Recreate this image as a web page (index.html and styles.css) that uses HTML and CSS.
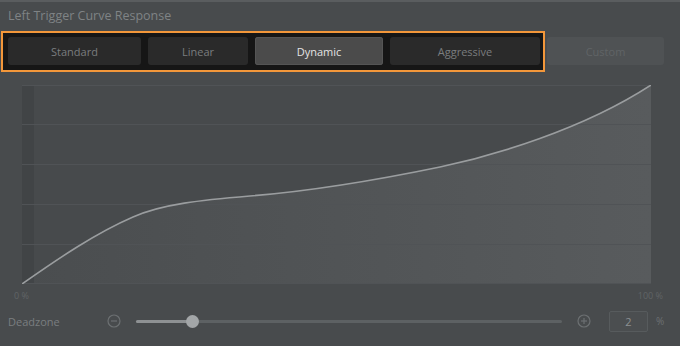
FILE: index.html
```html
<!DOCTYPE html>
<html>
<head>
<meta charset="utf-8">
<link rel="stylesheet" href="styles.css">
</head>
<body>
<div class="panel">
  <div class="title">Left Trigger Curve Response</div>
  <div class="presets">
    <div class="group">
      <button class="btn w-standard">Standard</button>
      <button class="btn w-linear">Linear</button>
      <button class="btn active w-dynamic">Dynamic</button>
      <button class="btn w-aggressive">Aggressive</button>
    </div>
    <button class="btn custom">Custom</button>
  </div>
  <div class="chart">
    <svg width="629" height="199" viewBox="0 0 629 199">
      <defs>
        <linearGradient id="fillg" x1="0" y1="0" x2="1" y2="0">
          <stop offset="0" stop-color="#4a4d4f"/>
          <stop offset="1" stop-color="#585b5d"/>
        </linearGradient>
      </defs>
      <rect x="0" y="0" width="629" height="199" fill="#474a4c"/>
      <path d="M0,199 C37,173 74,148 111,132 C140,119 180,115 228,111 C290,106 360,94 418,82 C470,71 560,45 629,0 L629,199 Z" fill="url(#fillg)"/>
      <rect x="0" y="0" width="12" height="199" fill="#3f4244" opacity="0.7"/>
      <g stroke="#505356" stroke-width="1">
        <line x1="0" y1="0.5" x2="629" y2="0.5"/>
        <line x1="0" y1="39.5" x2="629" y2="39.5"/>
        <line x1="0" y1="79.5" x2="629" y2="79.5"/>
        <line x1="0" y1="119.5" x2="629" y2="119.5"/>
        <line x1="0" y1="159.5" x2="629" y2="159.5"/>
        <line x1="0" y1="198.5" x2="629" y2="198.5"/>
      </g>
      <path d="M0,199 C37,173 74,148 111,132 C140,119 180,115 228,111 C290,106 360,94 418,82 C470,71 560,45 629,0" fill="none" stroke="#9a9d9f" stroke-width="1.6"/>
    </svg>
  </div>
  <div class="axis">
    <span>0 %</span>
    <span>100 %</span>
  </div>
  <div class="deadzone">
    <span class="dz-label">Deadzone</span>
    <svg class="icon" width="14" height="14" viewBox="0 0 14 14">
      <circle cx="7" cy="7" r="6" fill="none" stroke="#6c7072" stroke-width="1.2"/>
      <line x1="4" y1="7" x2="10" y2="7" stroke="#6c7072" stroke-width="1.2"/>
    </svg>
    <div class="slider">
      <div class="track"><div class="filled" style="width:56px"></div></div>
      <div class="thumb" style="left:56px"></div>
    </div>
    <svg class="icon" width="14" height="14" viewBox="0 0 14 14">
      <circle cx="7" cy="7" r="6" fill="none" stroke="#6c7072" stroke-width="1.2"/>
      <line x1="4" y1="7" x2="10" y2="7" stroke="#6c7072" stroke-width="1.2"/>
      <line x1="7" y1="4" x2="7" y2="10" stroke="#6c7072" stroke-width="1.2"/>
    </svg>
    <div class="value">2</div>
    <span class="unit">%</span>
  </div>
</div>
</body>
</html>
```

FILE: styles.css
```css
html, body {
  margin: 0;
  padding: 0;
  background: #484b4d;
  font-family: "Open Sans", "Noto Sans", sans-serif;
}
.panel {
  width: 680px;
  height: 346px;
  border-top: 2px solid #5a5d5f;
  box-sizing: border-box;
}
.title {
  height: 29px;
  line-height: 27px;
  padding-left: 8px;
  font-size: 12.5px;
  color: #7f8385;
}
.presets {
  display: flex;
  align-items: flex-start;
  padding-left: 1px;
}
.group {
  display: flex;
  gap: 7px;
  background: #161616;
  border: 2px solid #f3973a;
  padding: 4px 3px 5px 5px;
}
.btn {
  height: 28px;
  border: none;
  border-radius: 3px;
  background: #2a2a2a;
  color: #7a7d7f;
  font-family: "Open Sans", "Noto Sans", sans-serif;
  font-size: 11px;
  padding: 0;
}
.btn.active {
  background: #4b4b4b;
  color: #e4e4e4;
  box-shadow: inset 0 0 0 1px #555;
}
.w-standard { width: 133px; }
.w-linear { width: 100px; }
.w-dynamic { width: 128px; }
.w-aggressive { width: 150px; }
.btn.custom {
  width: 117px;
  margin-left: 2px;
  margin-top: 6px;
  background: #4f5254;
  color: #606466;
}
.chart {
  margin: 13px 0 0 22px;
  height: 199px;
}
.chart svg { display: block; }
.axis {
  display: flex;
  justify-content: space-between;
  padding: 0 17px 0 14px;
  font-size: 9px;
  color: #606466;
  height: 14px;
  line-height: 24px;
}
.deadzone {
  display: flex;
  align-items: center;
  height: 46px;
  padding-left: 8px;
}
.dz-label {
  width: 99px;
  font-size: 11px;
  color: #7a7e80;
}
.icon { flex: none; }
.slider {
  position: relative;
  width: 426px;
  margin: 0 15px 0 15px;
  height: 14px;
  display: flex;
  align-items: center;
}
.track {
  width: 100%;
  height: 3px;
  border-radius: 2px;
  background: #5d6163;
}
.filled {
  height: 3px;
  border-radius: 2px;
  background: #8e9193;
}
.thumb {
  position: absolute;
  top: 1px;
  width: 13px;
  height: 13px;
  margin-left: -6.5px;
  border-radius: 50%;
  background: #a3a6a8;
}
.value {
  width: 37px;
  height: 19px;
  margin-left: 18px;
  border: 1px solid #575b5d;
  border-radius: 2px;
  background: #4b4e50;
  color: #8d9092;
  font-size: 11px;
  text-align: center;
  line-height: 19px;
}
.unit {
  margin-left: 8px;
  font-size: 10px;
  color: #6c7072;
}
```
